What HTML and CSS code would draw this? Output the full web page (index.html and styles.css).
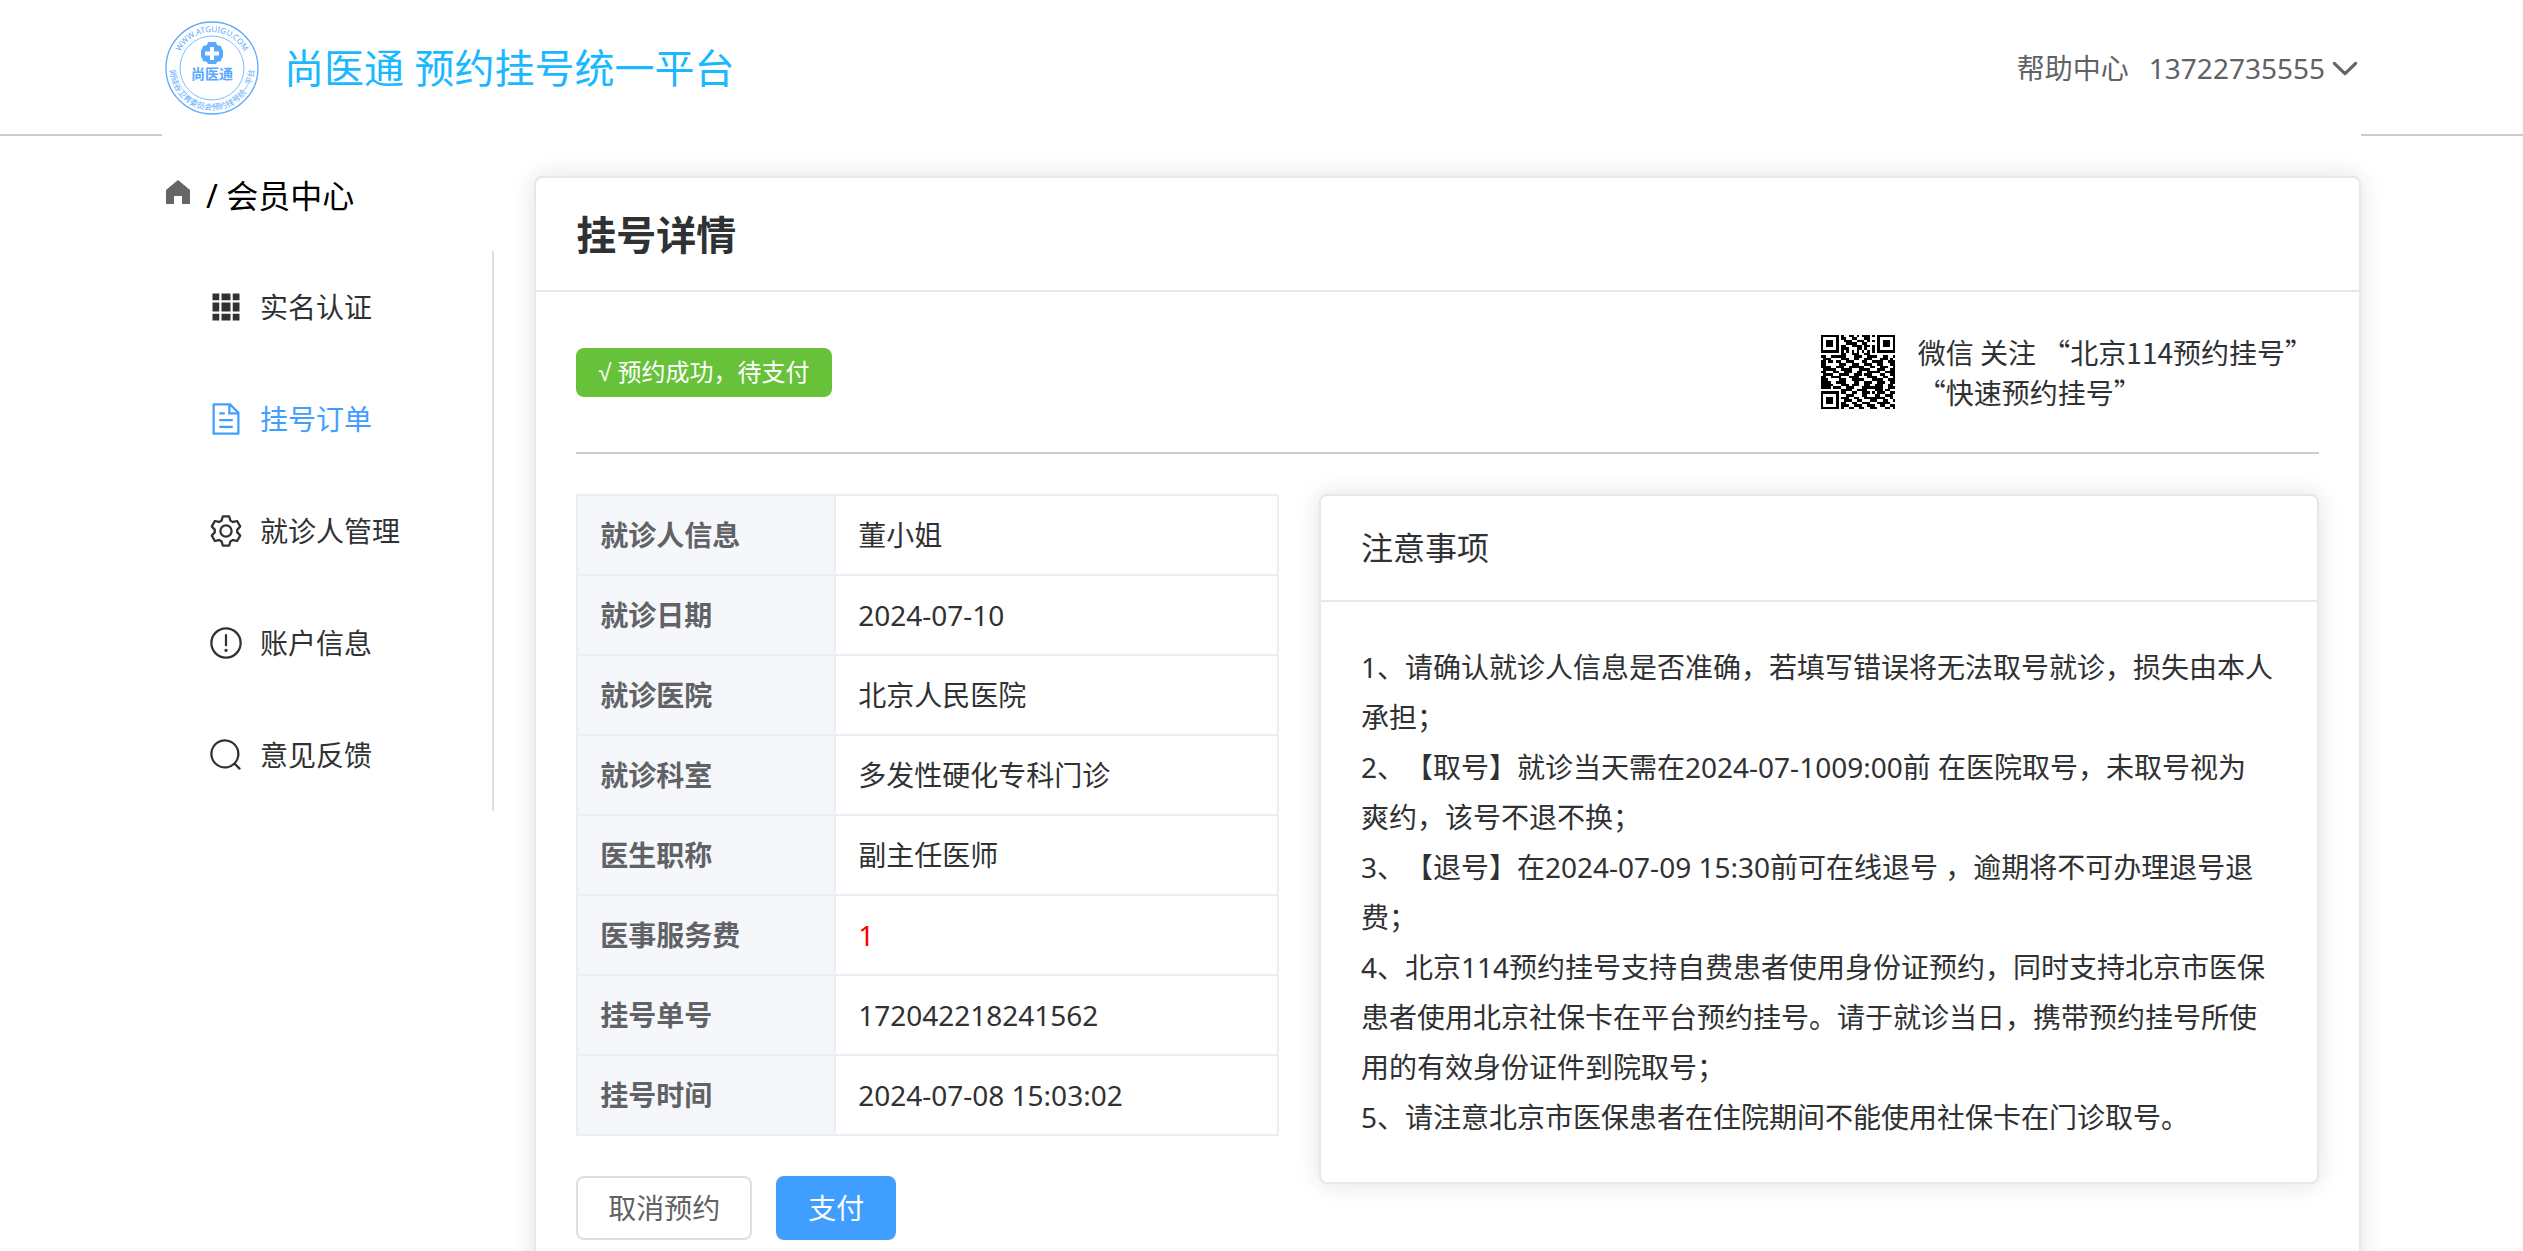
FILE: index.html
```html
<!DOCTYPE html>
<html lang="zh-CN">
<head>
<meta charset="UTF-8">
<meta name="viewport" content="width=device-width, initial-scale=1">
<title>尚医通 预约挂号统一平台</title>
<link rel="stylesheet" href="styles.css">
</head>
<body>
<header class="top">
  <div class="container top-inner">
    <a class="brand" href="#">
      <svg class="logo" viewBox="0 0 100 100" role="img" aria-label="尚医通">
        <defs>
          <path id="arc-top" d="M14 50a36 36 0 0 1 72 0"/>
          <path id="arc-bottom" d="M9 41A42 42 0 1 0 91 41"/>
        </defs>
        <circle class="ring" cx="50" cy="50" r="46" stroke-width="1.300"/>
        <circle class="ring" cx="50" cy="50" r="32" stroke-width="0.800"/>
        <text class="seal-latin"><textPath href="#arc-top" startOffset="50%">WWW.ATGUIGU.COM</textPath></text>
        <text class="seal-cjk"><textPath href="#arc-bottom" startOffset="50%">尚硅谷卫育委员会预约挂号统一平台</textPath></text>
        <path class="cross" fill-rule="evenodd" d="M46 24h8l1 3 4 1 1 3 1 1v7l-1 1-1 3-4 1-1 2h-8l-1-2-4-1-1-3-1-1v-7l1-1 1-3 4-1zM48 29v4.500h-5v4h5v4.500h4v-4.500h5v-4h-5V29z"/>
        <text class="seal-name" x="50" y="61">尚医通</text>
      </svg>
      <span class="brand-name">尚医通 预约挂号统一平台</span>
    </a>
    <div class="top-links">
      <a href="#">帮助中心</a>
      <button class="user" type="button">13722735555
        <svg class="arrow" viewBox="0 0 1024 1024" aria-hidden="true"><path d="M831.872 340.864 512 652.672 192.128 340.864a30.592 30.592 0 0 0-42.752 0 29.120 29.120 0 0 0 0 41.600L489.664 714.240a32 32 0 0 0 44.672 0l340.288-331.712a29.120 29.120 0 0 0 0-41.728 30.592 30.592 0 0 0-42.752 0z"/></svg>
      </button>
    </div>
  </div>
</header>

<div class="container page">
  <aside class="side">
    <div class="crumb">
      <svg viewBox="0 0 1024 1024" aria-hidden="true"><path d="M512 128 128 447.936V896h255.936V640H640v256h255.936V447.936z"/></svg>
      <span>/ 会员中心</span>
    </div>
    <nav class="menu">
      <a href="#"><span class="ico"><svg viewBox="0 0 1024 1024"><path d="M640 384v256H384V384zm64 0h192v256H704zm-64 512H384V704h256zm64 0V704h192v192zm-64-768v192H384V128zm64 0h192v192H704zM320 384v256H128V384zm0 512H128V704h192zm0-768v192H128V128z"/></svg></span>实名认证</a>
      <a href="#" class="active" aria-current="page"><span class="ico"><svg viewBox="0 0 1024 1024"><path d="M832 384H576V128H192v768h640zm-26.496-64L640 154.496V320zM160 64h480l256 256v608a32 32 0 0 1-32 32H160a32 32 0 0 1-32-32V96a32 32 0 0 1 32-32m160 448h384v64H320zm0-192h160v64H320zm0 384h384v64H320z"/></svg></span>挂号订单</a>
      <a href="#"><span class="ico"><svg viewBox="0 0 1024 1024"><path d="M600.704 64a32 32 0 0 1 30.464 22.208l35.200 109.376c14.784 7.232 28.928 15.360 42.432 24.512l112.384-24.192a32 32 0 0 1 34.432 15.360L944.320 364.800a32 32 0 0 1-4.032 37.504l-77.120 85.120a357.120 357.120 0 0 1 0 49.024l77.120 85.248a32 32 0 0 1 4.032 37.504l-88.704 153.600a32 32 0 0 1-34.432 15.296L708.800 803.904c-13.440 9.088-27.648 17.280-42.368 24.512l-35.264 109.376A32 32 0 0 1 600.704 960H423.296a32 32 0 0 1-30.464-22.208L357.696 828.480a351.616 351.616 0 0 1-42.560-24.640l-112.320 24.256a32 32 0 0 1-34.432-15.360L79.680 659.200a32 32 0 0 1 4.032-37.504l77.120-85.248a357.120 357.120 0 0 1 0-48.896l-77.120-85.248A32 32 0 0 1 79.680 364.800l88.704-153.600a32 32 0 0 1 34.432-15.296l112.320 24.256c13.568-9.152 27.776-17.408 42.560-24.640l35.200-109.312A32 32 0 0 1 423.232 64H600.640zm-23.424 64H446.720l-36.352 113.088-24.512 11.968a294.113 294.113 0 0 0-34.816 20.096l-22.656 15.360-116.224-25.088-65.280 113.152 79.680 88.192-1.920 27.136a293.120 293.120 0 0 0 0 40.192l1.920 27.136-79.808 88.192 65.344 113.152 116.224-25.024 22.656 15.296a294.113 294.113 0 0 0 34.816 20.096l24.512 11.968L446.720 896h130.688l36.480-113.152 24.448-11.904a288.282 288.282 0 0 0 34.752-20.096l22.592-15.296 116.288 25.024 65.280-113.152-79.744-88.192 1.920-27.136a293.120 293.120 0 0 0 0-40.256l-1.920-27.136 79.808-88.128-65.344-113.152-116.288 24.960-22.592-15.232a287.616 287.616 0 0 0-34.752-20.096l-24.448-11.904L577.344 128zM512 320a192 192 0 1 1 0 384 192 192 0 0 1 0-384m0 64a128 128 0 1 0 0 256 128 128 0 0 0 0-256"/></svg></span>就诊人管理</a>
      <a href="#"><span class="ico"><svg viewBox="0 0 1024 1024"><path d="M512 64a448 448 0 1 1 0 896 448 448 0 0 1 0-896m0 832a384 384 0 0 0 0-768 384 384 0 0 0 0 768m48-176a48 48 0 1 1-96 0 48 48 0 0 1 96 0m-48-464a32 32 0 0 1 32 32v288a32 32 0 0 1-64 0V288a32 32 0 0 1 32-32"/></svg></span>账户信息</a>
      <a href="#"><span class="ico"><svg viewBox="0 0 1024 1024"><path d="m795.904 750.720 124.992 124.928a32 32 0 0 1-45.248 45.248L750.656 795.904a416 416 0 1 1 45.248-45.248zM480 832a352 352 0 1 0 0-704 352 352 0 0 0 0 704"/></svg></span>意见反馈</a>
    </nav>
  </aside>

  <main class="card detail">
    <h1 class="detail-title">挂号详情</h1>
    <div class="detail-body">
      <div class="status">
        <span class="tag"><span class="check">√</span> 预约成功，待支付</span>
        <div class="follow">
          <svg class="qr" viewBox="-1 -1 31 31" shape-rendering="crispEdges" role="img" aria-label="二维码"><path id="qr-path"/></svg>
          <p class="follow-text">微信 关注 “北京114预约挂号”<br>“快速预约挂号”</p>
        </div>
      </div>

      <div class="columns">
        <section>
          <table class="info">
            <tr><th scope="row">就诊人信息</th><td>董小姐</td></tr>
            <tr><th scope="row">就诊日期</th><td>2024-07-10</td></tr>
            <tr><th scope="row">就诊医院</th><td>北京人民医院</td></tr>
            <tr><th scope="row">就诊科室</th><td>多发性硬化专科门诊</td></tr>
            <tr><th scope="row">医生职称</th><td>副主任医师</td></tr>
            <tr><th scope="row">医事服务费</th><td class="fee">1</td></tr>
            <tr><th scope="row">挂号单号</th><td>172042218241562</td></tr>
            <tr><th scope="row">挂号时间</th><td>2024-07-08 15:03:02</td></tr>
          </table>
          <div class="actions">
            <button class="btn" type="button">取消预约</button>
            <button class="btn primary" type="button">支付</button>
          </div>
        </section>

        <section class="card notice">
          <h2 class="notice-title">注意事项</h2>
          <div class="notice-body">
            <p>1、请确认就诊人信息是否准确，若填写错误将无法取号就诊，损失由本人<br>承担；</p>
            <p>2、【取号】就诊当天需在2024-07-1009:00前 在医院取号，未取号视为<br>爽约，该号不退不换；</p>
            <p>3、【退号】在2024-07-09 15:30前可在线退号 ，逾期将不可办理退号退<br>费；</p>
            <p>4、北京114预约挂号支持自费患者使用身份证预约，同时支持北京市医保<br>患者使用北京社保卡在平台预约挂号。请于就诊当日，携带预约挂号所使<br>用的有效身份证件到院取号；</p>
            <p>5、请注意北京市医保患者在住院期间不能使用社保卡在门诊取号。</p>
          </div>
        </section>
      </div>
    </div>
  </main>
</div>
<script src="qr.js"></script>
</body>
</html>
```
FILE: qr.js
```js
// One string per row of the code, "1" is a dark module.
const rows = [
  "11111110100110101110101111111",
  "10000010110011000110001000001",
  "10111010011100111010101011101",
  "10111010001111001100001011101",
  "10111010110011110110101011101",
  "10000010111000110100101000001",
  "11111110101010101010101111111",
  "00000000110011100110000000000",
  "11001111110001110011110011001",
  "01110000111001100111000111010",
  "11011011001110001100111100111",
  "11000001110011100111001100011",
  "11110011100111111001100111001",
  "01111100111100011110001110011",
  "11000110011100110011111001111",
  "01111001111001110111000110011",
  "11001111000111100011110011001",
  "11100001110011111000111100111",
  "11110011110001100111001110011",
  "11111000111011100110011100110",
  "11110111001110001111111100111",
  "00000000111100111100011101100",
  "11111110110011001110101110011",
  "10000010001110001100011001110",
  "10111010111001100111111110010",
  "10111010011100110001110011001",
  "10111010110011001110001111100",
  "10000010111001110011100110011",
  "11111110100110011001110001101"
];
let d = "";
rows.forEach((row, y) => {
  [...row].forEach((cell, x) => {
    if (cell === "1") d += `M${x} ${y}h1v1h-1z`;
  });
});
document.getElementById("qr-path").setAttribute("d", d);
```
FILE: styles.css
```css
* { box-sizing: border-box; }

body {
  margin: 0;
  background: #fff;
  color: #303133;
  font-family: "Noto Sans", "Noto Sans CJK SC", sans-serif;
  font-size: 28px;
  line-height: 40px;
  text-spacing-trim: space-all;
}

h1, h2, p { margin: 0; font-weight: 400; }
a { color: inherit; text-decoration: none; }
svg { display: block; flex: none; fill: currentColor; }
button { font: inherit; cursor: pointer; }

.container {
  width: 88%;
  max-width: 2199px;
  margin: 0 auto;
}

/* header */
.top { border-bottom: 2px solid #ccc; }
.top-inner {
  display: flex;
  align-items: center;
  justify-content: space-between;
  height: 136px;
  margin-bottom: -2px;
  background: #fff;
}
.brand { display: flex; align-items: center; gap: 22px; }
.logo { width: 100px; height: 100px; color: #5aa9ff; }
.ring { fill: none; stroke: currentColor; }
.seal-latin, .seal-cjk, .seal-name { text-anchor: middle; }
.seal-latin, .seal-cjk { font-size: 8px; }
.seal-name { font-size: 14px; font-weight: 700; }
.brand-name { font-size: 40px; color: #1ab8ff; }
.top-links { display: flex; align-items: center; gap: 20px; color: #606266; }
.user {
  display: flex;
  align-items: center;
  gap: 4px;
  padding: 0;
  border: 0;
  background: none;
  color: inherit;
}
.arrow { width: 32px; height: 32px; stroke: currentColor; stroke-width: 40px; }

/* page columns */
.page {
  display: grid;
  grid-template-columns: 2fr 11fr;
  gap: 40px;
  align-items: start;
  padding: 40px 0;
}

.crumb { display: flex; gap: 12px; font-size: 32px; color: #000; }
.crumb svg { width: 32px; height: 32px; color: #666; }
.menu {
  display: flex;
  flex-direction: column;
  margin-top: 35px;
  border-right: 2px solid #dcdfe6;
}
.menu a { display: flex; align-items: center; gap: 10px; height: 112px; padding-left: 40px; }
.menu .active { color: #409eff; }
.ico { display: flex; justify-content: center; width: 48px; }
.ico svg { width: 36px; height: 36px; }

.card {
  border: 2px solid #e4e7ed;
  border-radius: 8px;
  background: #fff;
  box-shadow: 0 0 24px rgba(0, 0, 0, .12);
}

.detail-title {
  padding: 37px 40px 35px;
  border-bottom: 2px solid #e4e7ed;
  font-size: 40px;
  font-weight: 700;
}
.detail-body { padding: 40px; }

.status {
  display: flex;
  align-items: center;
  justify-content: space-between;
  padding-bottom: 40px;
  border-bottom: 2px solid #ccc;
}
.tag {
  padding: 4px 22px;
  border-radius: 8px;
  background: #67c23a;
  color: #fff;
  font-size: 24px;
}
.check { font-family: "Liberation Sans", sans-serif; }
.follow { display: flex; align-items: center; gap: 20px; padding-right: 6px; }
.qr { width: 80px; height: 80px; color: #000; }
.follow-text { font-family: "Noto Sans CJK SC", sans-serif; }

.columns {
  display: grid;
  grid-template-columns: 1fr 1000px;
  gap: 40px;
  align-items: start;
  margin-top: 40px;
}

.info { width: 100%; border-collapse: collapse; }
.info th, .info td {
  height: 80px;
  padding: 0 22px;
  border: 2px solid #ebeef5;
  text-align: left;
}
.info th { width: 258px; background: #f5f7fa; color: #606266; font-weight: 700; }
.info .fee { color: #f00; }

.actions { display: flex; gap: 24px; margin-top: 40px; }
.btn {
  padding: 10px 30px;
  border: 2px solid #dcdfe6;
  border-radius: 8px;
  background: #fff;
  color: #606266;
}
.btn.primary { border-color: #409eff; background: #409eff; color: #fff; }

.notice-title {
  padding: 32px 40px;
  border-bottom: 2px solid #e4e7ed;
  font-size: 32px;
}
.notice-body { padding: 40px; line-height: 50px; }
```
